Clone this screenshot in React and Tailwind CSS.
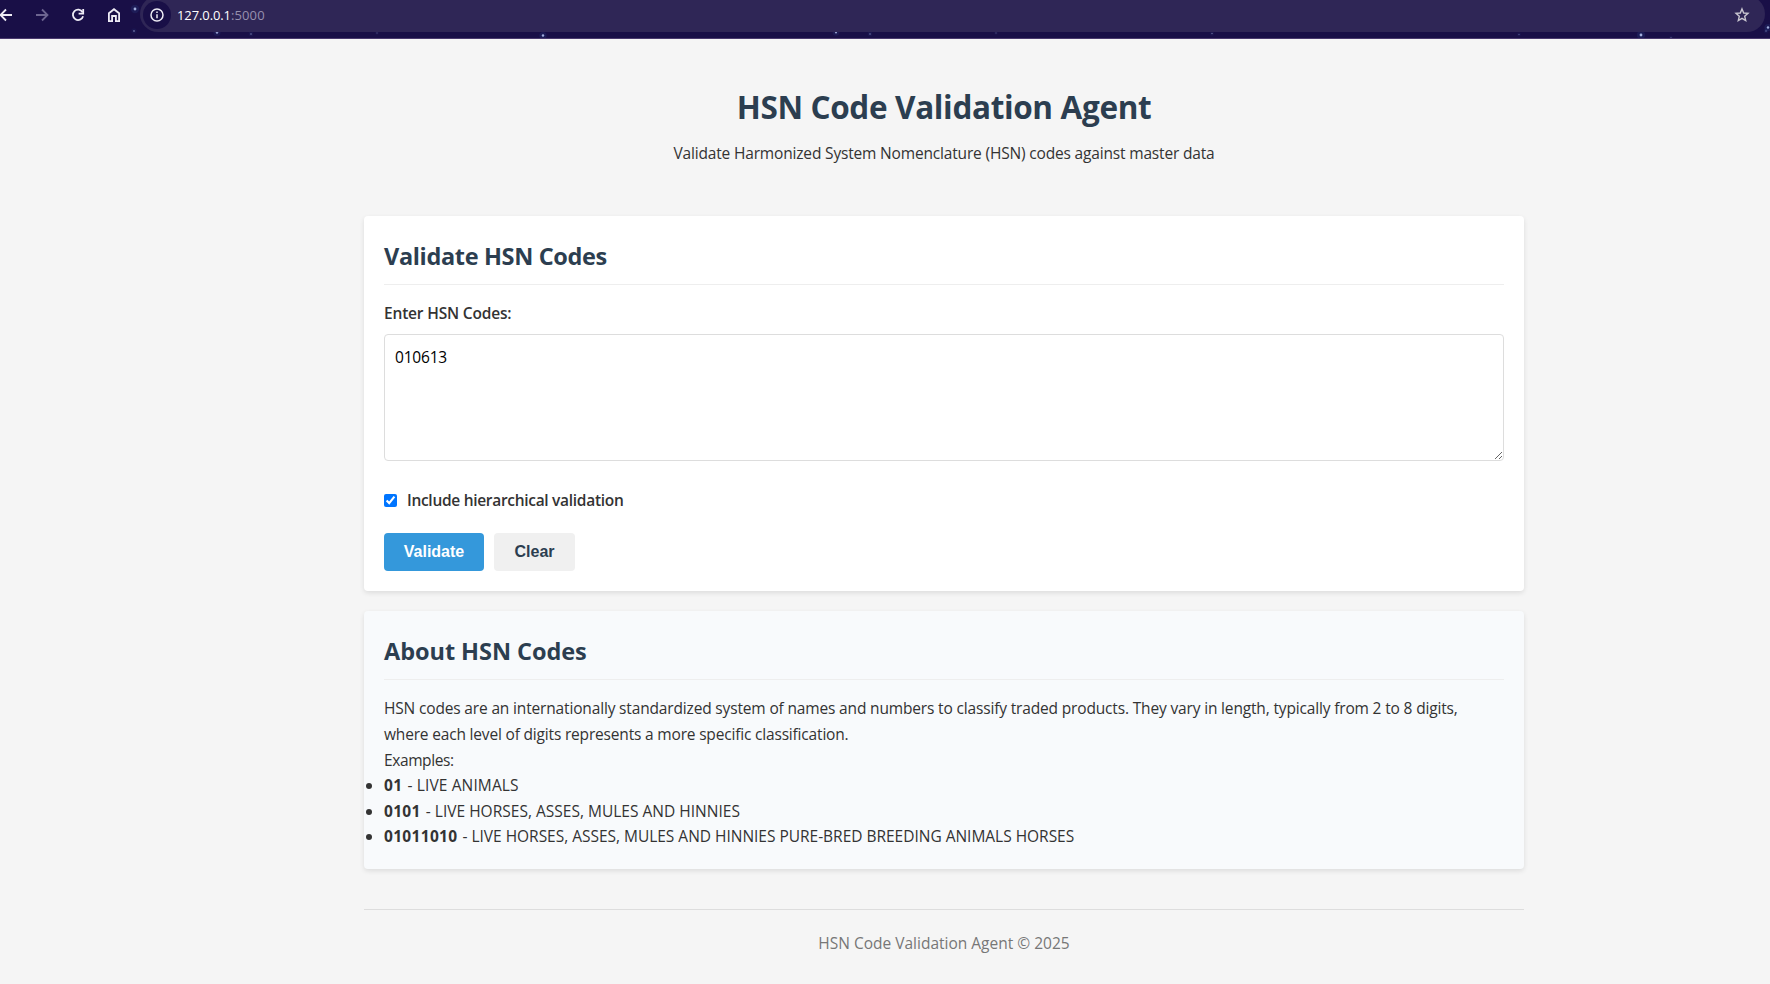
import React from "react";

const stars = [
  [135, 9, 1.4, 0.8],
  [134, 31, 0.9, 0.45],
  [217, 32.5, 1.2, 0.7],
  [251, 34, 0.8, 0.5],
  [377, 33, 0.7, 0.3],
  [543, 35.5, 1.2, 0.8],
  [836, 32.5, 1.1, 0.7],
  [870, 34, 0.8, 0.5],
  [996, 33, 0.7, 0.3],
  [1212, 33.5, 0.8, 0.4],
  [1519, 34.5, 0.7, 0.35],
  [1641, 35, 1.4, 0.8],
  [1671, 37.5, 0.7, 0.3],
  [1768, 27.5, 1.2, 0.8],
  [1766, 31, 0.8, 0.45],
];

const examples = [
  { code: "01", text: "LIVE ANIMALS", spacing: "tracking-[0.12px]" },
  { code: "0101", text: "LIVE HORSES, ASSES, MULES AND HINNIES", spacing: "tracking-[0.01px]" },
  {
    code: "01011010",
    text: "LIVE HORSES, ASSES, MULES AND HINNIES PURE-BRED BREEDING ANIMALS HORSES",
    spacing: "tracking-[-0.02px]",
  },
];

function Icon({ className = "", children }) {
  return (
    <svg viewBox="0 0 16 16" className={`size-4 shrink-0 ${className}`} fill="none" stroke="currentColor" strokeWidth="1.8">
      {children}
    </svg>
  );
}

function BrowserBar() {
  return (
    <div className="relative h-[39px] w-full overflow-hidden border-b border-[#4a3a6e] bg-[#190f47]">
      <svg className="absolute inset-0" width="1770" height="38">
        {stars.map(([x, y, r, o]) => (
          <g key={x} fill="#c3d3ff">
            <circle cx={x} cy={y} r={r * 3} fill="#3f7fd0" opacity={o * 0.15} />
            <circle cx={x} cy={y} r={r} opacity={o} />
          </g>
        ))}
      </svg>
      <div className="relative flex h-8 items-start">
        <div className="flex h-[30px] w-[140px] shrink-0 items-center gap-5 text-[#eeecf5]">
          <Icon className="-ml-0.5">
            <path d="M14 8H3M8 2.5 2.5 8 8 13.5" />
          </Icon>
          <Icon className="text-[#6d6590]">
            <path d="M2 8h11M8 2.5 13.5 8 8 13.5" />
          </Icon>
          <Icon>
            <path d="M12.6 5.2A5.2 5.2 0 1 0 13.1 9.3" />
            <path d="M13.2 2v4.6H8.6" />
          </Icon>
          <Icon>
            <path d="M2.900 14.100V6.200L8 2.200l5.100 4v7.900H9.900V9H6.100v5.100z" />
          </Icon>
        </div>
        <div className="-mt-1 flex h-9 w-[1625px] items-center rounded-[18px] bg-[#2f2656] pt-[2px]">
          <div className="ml-[3px] flex size-7 items-center justify-center rounded-full bg-[#190f47]">
            <svg viewBox="0 0 16 16" className="size-4 text-[#eeecf5]" fill="none" stroke="currentColor" strokeWidth="1.5">
              <circle cx="8" cy="8" r="6" />
              <path d="M8 7.200v4M8 4.600v1.500" />
            </svg>
          </div>
          <div className="ml-[6px] flex-1 font-['Open_Sans',sans-serif] text-[13px] leading-4 text-white">
            <span className="tracking-[-0.1px]">127.0.0.1</span>
            <span className="tracking-[0.12px] text-[#9790ae]">:5000</span>
          </div>
          <svg viewBox="0 0 16 16" className="mr-[15px] size-4 text-[#c9c6d0]" fill="none" stroke="currentColor" strokeWidth="1.4">
            <path d="M8 1.900 9.700 6l4.300.400-3.300 2.900 1 4.300L8 11.300l-3.700 2.300 1-4.300L2 6.400 6.300 6z" />
          </svg>
        </div>
      </div>
    </div>
  );
}

function Card({ title, titleClass, className, children }) {
  return (
    <section className={`rounded-[4px] p-5 shadow-[0_2px_5px_rgba(0,0,0,0.1)] ${className}`}>
      <h2 className={`mb-4 h-[49.4px] border-b border-[#eeeeee] pt-px text-[23.5px] leading-[38.4px] font-bold text-[#2c3e50] ${titleClass}`}>
        {title}
      </h2>
      {children}
    </section>
  );
}

export default function App() {
  return (
    <div className="h-[984px] w-full overflow-hidden bg-[#f5f5f5] font-['Open_Sans',sans-serif] text-[15.5px] leading-[25.6px] text-[#333333]">
      <BrowserBar />
      <main className="ml-[364px] w-[1160px]">
        <header className="mb-[30px] flex h-[147px] flex-col items-center pt-[42px] text-center">
          <h1 className="mb-[9px] text-[31.5px] leading-[51.2px] font-bold tracking-[-0.35px] whitespace-nowrap text-[#2c3e50]">
            HSN Code Validation Agent
          </h1>
          <p className="tracking-[-0.17px] whitespace-nowrap">
            Validate Harmonized System Nomenclature (HSN) codes against master data
          </p>
        </header>

        <Card title="Validate HSN Codes" titleClass="tracking-[-0.35px]" className="mb-5 h-[375px] bg-white">
          <label htmlFor="codes" className="mb-[7px] block font-semibold tracking-[-0.18px]">
            Enter HSN Codes:
          </label>
          <textarea
            id="codes"
            defaultValue="010613"
            className="block h-[127px] w-full resize-y rounded-[4px] border border-[#dddddd] bg-white p-[10px] pt-[11px] leading-[22px] tracking-[-0.2px] text-black"
          />
          <div className="mt-[27px] flex h-[26px] items-center">
            <input id="levels" type="checkbox" defaultChecked className="mr-[10px] size-[13px]" />
            <label htmlFor="levels" className="font-semibold tracking-[-0.3px]">
              Include hierarchical validation
            </label>
          </div>
          <div className="mt-[19px] flex gap-[10px] font-['Liberation_Sans',Arial,sans-serif] text-base leading-[18px] font-bold">
            <button className="h-[38px] w-[100px] rounded-[4px] bg-[#3498db] text-white">Validate</button>
            <button className="h-[38px] w-[81px] rounded-[4px] bg-[#f0f0f0] text-[#2c3e50]">Clear</button>
          </div>
        </Card>

        <Card title="About HSN Codes" titleClass="tracking-[-0.05px]" className="h-[258px] bg-[#f8fafc]">
          <p className="tracking-[-0.16px] whitespace-nowrap">
            HSN codes are an internationally standardized system of names and numbers to classify traded products. They vary in length, typically from 2 to 8 digits,
            <br />
            <span className="tracking-[-0.18px]">where each level of digits represents a more specific classification.</span>
          </p>
          <p className="tracking-[-0.4px]">Examples:</p>
          <ul className="list-disc">
            {examples.map(({ code, text, spacing }) => (
              <li key={code} className={`whitespace-nowrap ${spacing}`}>
                <strong className="mr-px tracking-[0.32px]">{code}</strong> - {text}
              </li>
            ))}
          </ul>
        </Card>

        <footer className="mt-10 border-t border-[#dddddd] pt-[21px] text-center text-[#777777]">
          <p>HSN Code Validation Agent © 2025</p>
        </footer>
      </main>
    </div>
  );
}
